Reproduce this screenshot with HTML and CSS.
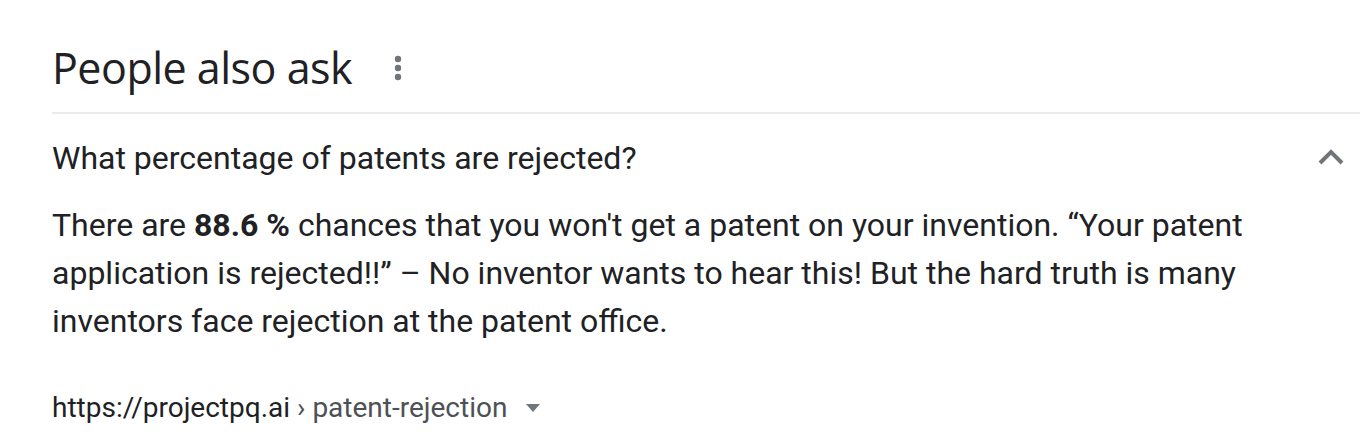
FILE: index.html
```html
<!DOCTYPE html>
<html lang="en">
<head>
    <meta charset="UTF-8">
    <title>People also ask</title>
    <link rel="stylesheet" href="styles.css">
</head>
<body>
    <div class="paa">
        <div class="paa__head">
            <h2 class="paa__title">People also ask</h2>
            <span class="paa__menu">
                <svg width="8" height="26" viewBox="0 0 8 26">
                    <circle cx="4" cy="4" r="3.2" fill="#70757a"/>
                    <circle cx="4" cy="13" r="3.2" fill="#70757a"/>
                    <circle cx="4" cy="22" r="3.2" fill="#70757a"/>
                </svg>
            </span>
        </div>

        <div class="paa__item">
            <div class="paa__question">
                <span>What percentage of patents are rejected?</span>
                <svg class="paa__chevron" width="26" height="16" viewBox="0 0 26 16">
                    <path d="M2 14 L13 3 L24 14" fill="none" stroke="#70757a" stroke-width="4"/>
                </svg>
            </div>
            <p class="paa__answer">There are <b>88.6 %</b> chances that you won't get a patent on your invention. “Your patent application is rejected!!” – No inventor wants to hear this! But the hard truth is many inventors face rejection at the patent office.</p>
            <div class="paa__source">
                <span class="paa__url">https://projectpq.ai</span>
                <span class="paa__path"> › patent-rejection</span>
                <svg class="paa__caret" width="16" height="10" viewBox="0 0 16 10">
                    <path d="M1 1 L15 1 L8 9 Z" fill="#70757a"/>
                </svg>
            </div>
        </div>
    </div>
</body>
</html>
```

FILE: styles.css
```css
body {
    margin: 0;
    background: #ffffff;
    font-family: Roboto, Arial, sans-serif;
    color: #202124;
}

.paa {
    padding-left: 52px;
}

.paa__head {
    display: flex;
    align-items: center;
    height: 114px;
    border-bottom: 2px solid #ebebeb;
    box-sizing: border-box;
    padding-top: 24px;
}

.paa__title {
    margin: 0;
    font-family: "Open Sans", Roboto, sans-serif;
    font-size: 43px;
    font-weight: 400;
    letter-spacing: -0.5px;
    line-height: 56px;
}

.paa__menu {
    display: flex;
    margin-left: 42px;
}

.paa__question {
    display: flex;
    justify-content: space-between;
    align-items: center;
    height: 88px;
    padding-right: 16px;
    font-size: 32px;
}

.paa__chevron {
    margin-top: -2px;
}

.paa__answer {
    margin: -1px 0 0;
    padding-right: 80px;
    font-size: 32px;
    line-height: 48px;
}

.paa__source {
    display: flex;
    align-items: center;
    margin-top: 46px;
    font-size: 28px;
}

.paa__url {
    color: #202124;
}

.paa__path {
    color: #4d5156;
    white-space: pre;
}

.paa__caret {
    margin-left: 18px;
}
```
